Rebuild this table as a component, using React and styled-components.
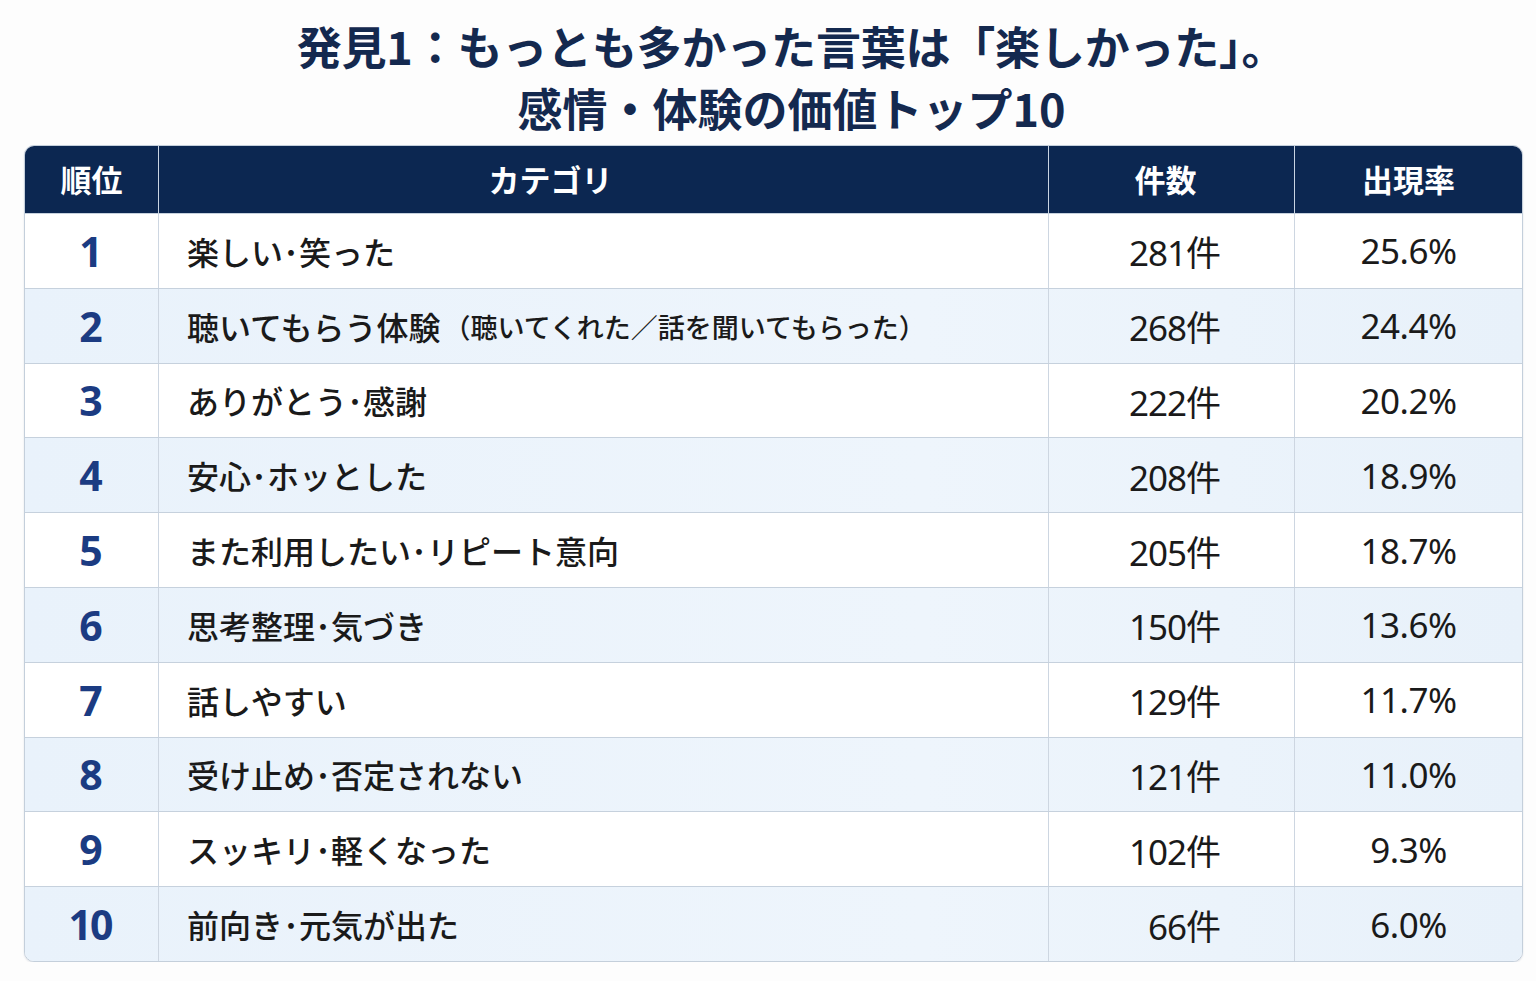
import styled, { createGlobalStyle } from 'styled-components';

const GlobalStyle = createGlobalStyle`
	html, body {
		margin: 0;
		padding: 0;
		background: #fdfdfd;
	}
	body {
		font-family: 'Noto Sans CJK JP', 'Noto Sans', sans-serif;
		color: #1a1a1a;
	}
`;

const rows = [
	{ rank: 1, label: '楽しい･笑った', count: '281件', rate: '25.6%' },
	{ rank: 2, label: '聴いてもらう体験', note: '（聴いてくれた／話を聞いてもらった）', count: '268件', rate: '24.4%' },
	{ rank: 3, label: 'ありがとう･感謝', count: '222件', rate: '20.2%' },
	{ rank: 4, label: '安心･ホッとした', count: '208件', rate: '18.9%' },
	{ rank: 5, label: 'また利用したい･リピート意向', count: '205件', rate: '18.7%' },
	{ rank: 6, label: '思考整理･気づき', count: '150件', rate: '13.6%' },
	{ rank: 7, label: '話しやすい', count: '129件', rate: '11.7%' },
	{ rank: 8, label: '受け止め･否定されない', count: '121件', rate: '11.0%' },
	{ rank: 9, label: 'スッキリ･軽くなった', count: '102件', rate: '9.3%' },
	{ rank: 10, label: '前向き･元気が出た', count: '66件', rate: '6.0%' },
];

const Page = styled.div`
	padding: 15px 13px 0 24px;
`;

const Title = styled.h1`
	margin: 0 0 6px;
	padding-left: 36px;
	text-align: center;
	font-size: 45px;
	line-height: 62px;
	font-weight: 700;
	color: #14294f;
`;

const TitleLine = styled.span`
	display: block;
	letter-spacing: ${p => p.$tight ? '-0.2px' : '0'};
`;

const Table = styled.div`
	border: 1px solid #c4cfdb;
	border-radius: 10px;
	overflow: hidden;
	background: #fff;
	box-shadow: 0 1px 2px rgba(20, 40, 80, 0.12);
`;

const cols = '133px 890px 246px 1fr';

const HeadRow = styled.div`
	display: grid;
	grid-template-columns: ${cols};
	height: 67px;
	background: #0c2751;
	color: #fff;
`;

const HeadCell = styled.div`
	display: flex;
	align-items: center;
	justify-content: center;
	padding-bottom: 2px;
	font-size: 31px;
	font-weight: 700;
	padding-right: ${p => p.$shift || 0}px;
	border-left: ${p => (p.$first ? 'none' : '1px solid #c9d4e2')};
`;

const Row = styled.div`
	display: grid;
	grid-template-columns: ${cols};
	height: 74.8px;
	box-sizing: border-box;
	border-top: 1px solid #c6d1dd;
	background: ${p => (p.$alt ? 'linear-gradient(90deg, #e9f2fb, #eef5fc 60%, #e8f1fa)' : '#ffffff')};
`;

const Cell = styled.div`
	display: flex;
	align-items: center;
	border-left: ${p => (p.$first ? 'none' : '1px solid #cdd6e1')};
`;

const Rank = styled(Cell)`
	justify-content: center;
	padding-right: 3px;
	font-family: 'Noto Sans', 'Noto Sans CJK JP', sans-serif;
	font-size: 41px;
	font-weight: 700;
	color: #1b3b82;
	letter-spacing: -2px;
`;

const Label = styled(Cell)`
	padding-left: 28px;
	font-size: 32px;
	font-weight: 500;
	color: #1a1a1a;
`;

const Note = styled.span`
	font-size: 27px;
	margin-left: 3px;
	padding-top: 2px;
`;

const Count = styled(Cell)`
	justify-content: flex-end;
	padding-right: 74px;
	font-family: 'Noto Sans', 'Noto Sans CJK JP', sans-serif;
	font-size: 35px;
	letter-spacing: -1px;
	color: #1a1a1a;
`;

const Rate = styled(Cell)`
	justify-content: center;
	font-family: 'Noto Sans', 'Noto Sans CJK JP', sans-serif;
	font-size: 35px;
	letter-spacing: -0.5px;
	color: #1a1a1a;
`;

const App = () => (
	<>
		<GlobalStyle />
		<Page>
			<Title>
				<TitleLine $tight>発見1：もっとも多かった言葉は「楽しかった」。</TitleLine>
				<TitleLine>感情・体験の価値トップ10</TitleLine>
			</Title>
			<Table>
				<HeadRow>
					<HeadCell $first>順位</HeadCell>
					<HeadCell $shift={106}>カテゴリ</HeadCell>
					<HeadCell $shift={12}>件数</HeadCell>
					<HeadCell>出現率</HeadCell>
				</HeadRow>
				{rows.map((r, i) => (
					<Row key={r.rank} $alt={i % 2 === 1}>
						<Rank $first>{r.rank}</Rank>
						<Label>
							{r.label}
							{r.note && <Note>{r.note}</Note>}
						</Label>
						<Count>{r.count}</Count>
						<Rate>{r.rate}</Rate>
					</Row>
				))}
			</Table>
		</Page>
	</>
);

export default App;
